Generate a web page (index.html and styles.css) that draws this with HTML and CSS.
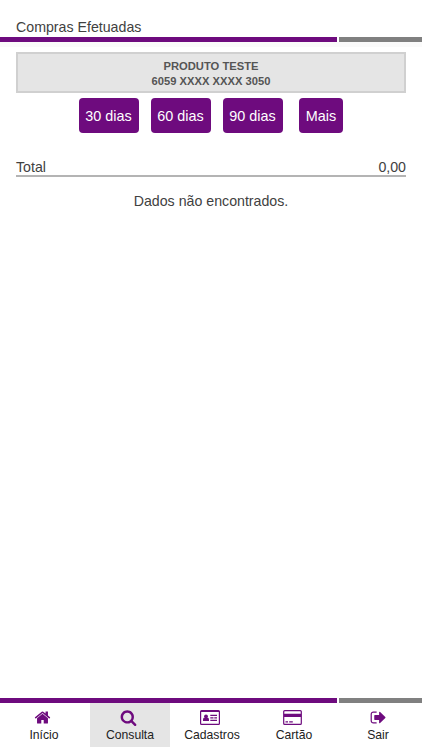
FILE: index.html
```html
<!DOCTYPE html>
<html lang="pt-BR">
  <head>
    <meta charset="utf-8" />
    <meta name="viewport" content="width=device-width, initial-scale=1" />
    <title>Compras Efetuadas</title>
    <link rel="stylesheet" href="styles.css">
  </head>
  <body>
    <div class="header">Compras Efetuadas</div>
    <div class="bar"><span class="bar-main"></span><span class="bar-end"></span></div>

    <div class="content">
      <div class="card-info">
        <div>PRODUTO TESTE</div>
        <div>6059 XXXX XXXX 3050</div>
      </div>

      <div class="periods">
        <button class="btn">30 dias</button>
        <button class="btn">60 dias</button>
        <button class="btn">90 dias</button>
        <button class="btn more">Mais</button>
      </div>

      <div class="total">
        <span>Total</span>
        <span>0,00</span>
      </div>
      <div class="empty">Dados não encontrados.</div>
    </div>

    <div class="bar"><span class="bar-main"></span><span class="bar-end"></span></div>
    <div class="menu">
      <a class="item first">
        <svg class="icon" width="17" height="17" viewBox="0 0 1792 1792"><path d="M1472 992v480q0 26-19 45t-45 19h-384v-384h-256v384h-384q-26 0-45-19t-19-45v-480q0-1 .5-3t.5-3l575-474 575 474q1 2 1 6zm223-69l-62 74q-8 9-21 11h-3q-13 0-21-7l-692-577-692 577q-12 8-24 7-13-2-21-11l-62-74q-8-10-7-23.5t11-21.5l719-599q32-26 76-26t76 26l244 204v-195q0-14 9-23t23-9h192q14 0 23 9t9 23v408l219 182q10 8 11 21.5t-7 23.5z"/></svg>
        <span>Início</span>
      </a>
      <a class="item active">
        <svg class="icon" width="17" height="17" viewBox="0 0 1792 1792"><path d="M1216 832q0-185-131.500-316.500t-316.500-131.500-316.500 131.500-131.500 316.500 131.500 316.500 316.500 131.500 316.500-131.500 131.500-316.500zm512 832q0 52-38 90t-90 38q-54 0-90-38l-343-342q-179 124-399 124-143 0-273.500-55.500t-225-150-150-225-55.500-273.500 55.500-273.500 150-225 225-150 273.500-55.500 273.500 55.500 225 150 150 225 55.500 273.500q0 220-124 399l343 343q37 37 37 90z"/></svg>
        <span>Consulta</span>
      </a>
      <a class="item">
        <svg class="icon" width="20" height="17" viewBox="0 0 20 17">
          <path fill-rule="evenodd" d="M1.500 1h17a1.500 1.500 0 0 1 1.500 1.500v12a1.500 1.500 0 0 1-1.500 1.500h-17a1.500 1.500 0 0 1-1.500-1.500v-12a1.500 1.500 0 0 1 1.500-1.500zM1.200 3v11.300q0 .5.500.5h16.600q.5 0 .5-.5v-11.300z"/>
          <circle cx="6" cy="7.300" r="1.900"/>
          <path d="M3 12v-1.200q0-2.200 1.600-2.200 1.400 1 2.800 0 1.600 0 1.600 2.200v1.200zM10.300 5.800h6.700v1.200h-6.700zM10.300 8.300h3.200v1.200h-3.200zM14.300 8.300h2.700v1.200h-2.700zM10.300 10.800h6.700v1.200h-6.700z"/>
        </svg>
        <span>Cadastros</span>
      </a>
      <a class="item">
        <svg class="icon" width="19" height="17" viewBox="0 0 19 17">
          <path fill-rule="evenodd" d="M1.700 1h15.600a1.600 1.600 0 0 1 1.600 1.600v11.800a1.600 1.600 0 0 1-1.600 1.600h-15.600a1.600 1.600 0 0 1-1.600-1.600v-11.800a1.600 1.600 0 0 1 1.600-1.600zM1.800 2.200q-.5 0-.5.500v2.100h16.400v-2.100q0-.5-.5-.5zM1.300 8v6.300q0 .5.500.5h15.400q.5 0 .5-.5v-6.300z"/>
          <path d="M2.500 12.300h2.500v1.200h-2.500zM6.200 12.300h3.600v1.200h-3.600z"/>
        </svg>
        <span>Cartão</span>
      </a>
      <a class="item last">
        <svg class="icon" width="17" height="17" viewBox="0 0 1792 1792"><path d="M704 1440q0 4 1 20t.5 26.500-3 23.500-10 19.500-20.500 6.500h-320q-119 0-203.500-84.500t-84.500-203.500v-704q0-119 84.500-203.500t203.500-84.500h320q13 0 22.500 9.500t9.500 22.500q0 4 1 20t.5 26.500-3 23.500-10 19.500-20.500 6.500h-320q-66 0-113 47t-47 113v704q0 66 47 113t113 47h312l11.500 1 11.500 3 8 5.500 7 9 2 13.500zm928-544q0 26-19 45l-544 544q-19 19-45 19t-45-19-19-45v-288h-448q-26 0-45-19t-19-45v-384q0-26 19-45t45-19h448v-288q0-26 19-45t45-19 45 19l544 544q19 19 19 45z"/></svg>
        <span>Sair</span>
      </a>
    </div>
  </body>
</html>
```
FILE: styles.css
```css
* {
  box-sizing: border-box;
}

body {
  margin: 0;
  height: 750px;
  display: flex;
  flex-direction: column;
  background: #fff;
  color: #414141;
  font-family: "Liberation Sans", Arial, sans-serif;
  font-size: 14.2px;
}

.header {
  height: 37px;
  padding: 19px 16px 0;
  line-height: 16px;
}

.bar {
  display: flex;
  gap: 2px;
  height: 5px;
  flex-shrink: 0;
}
.bar-main {
  width: 337px;
  background: #6e0b7e;
}
.bar-end {
  flex: 1;
  background: #808080;
}

.content {
  flex: 1;
  padding: 5px 16px 0;
  border-top: 5px solid #fafafa;
}

.card-info {
  height: 41px;
  padding-top: 5px;
  border: 2px solid #d0d0d0;
  background: #e5e5e5;
  color: #555;
  font-size: 11.2px;
  font-weight: bold;
  line-height: 15px;
  text-align: center;
}

.periods {
  display: flex;
  justify-content: center;
  gap: 12px;
  margin-top: 5px;
}
.btn {
  width: 60px;
  height: 35px;
  padding: 0 1px 0 0;
  border: 0;
  border-radius: 4px;
  background: #6e0b7e;
  color: #fff;
  font-family: inherit;
  font-size: 14.4px;
}
.more {
  width: 44px;
  margin-left: 4px;
  padding: 0;
}

.total {
  display: flex;
  justify-content: space-between;
  height: 18px;
  margin-top: 26px;
  border-bottom: 2px solid #b4b4b4;
  line-height: 17px;
}

.empty {
  margin-top: 16px;
  line-height: 17px;
  text-align: center;
}

.menu {
  display: flex;
  height: 47px;
  padding-bottom: 3px;
  flex-shrink: 0;
}
.item {
  display: flex;
  flex-direction: column;
  align-items: center;
  width: 82px;
  padding-top: 6px;
  color: #222;
  font-size: 12.2px;
  line-height: 14px;
}
.item .icon {
  margin: 0 4px 2px 0;
  fill: #6e0b7e;
}
.first {
  width: 90px;
  padding-right: 2px;
}
.active {
  width: 80px;
  margin-right: 1px;
  background: #e5e5e5;
}
.last {
  width: 86px;
}
.last .icon {
  margin-right: 0;
}
```
